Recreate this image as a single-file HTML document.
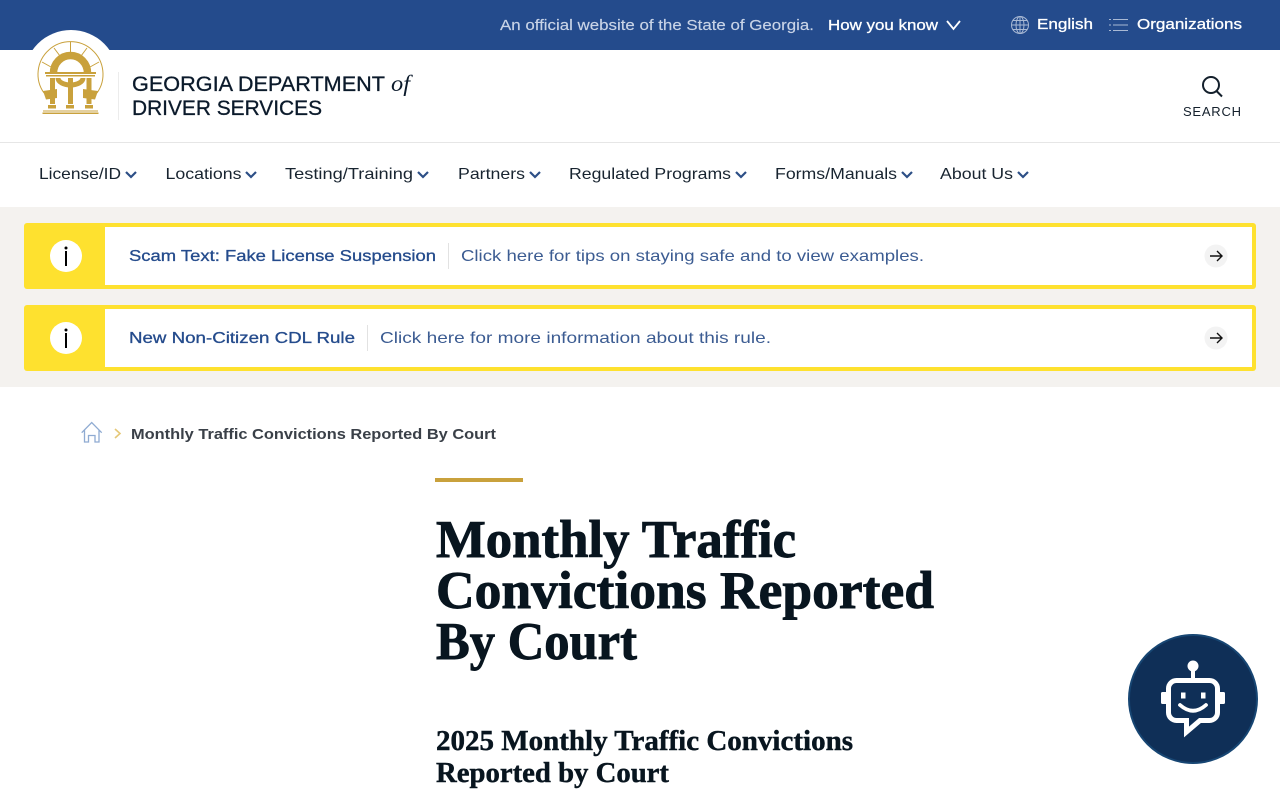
<!DOCTYPE html>
<html lang="en"><head><meta charset="utf-8"><title>Monthly Traffic Convictions Reported By Court</title>
<style>
html,body{margin:0;padding:0;width:1280px;height:800px;overflow:hidden;background:#fff}
svg{display:block}
text{font-family:"Liberation Sans",sans-serif;white-space:pre}
.m{stroke-width:.3px}
.l{stroke-width:.15px}
.serif{font-family:"Liberation Serif",serif;font-weight:700;fill:#08151f;stroke:#08151f;stroke-width:.9px}
.serif2{font-family:"Liberation Serif",serif;font-weight:700;fill:#08151f;stroke:#08151f;stroke-width:.45px}
</style></head><body>
<svg width="1280" height="800" viewBox="0 0 1280 800" xmlns="http://www.w3.org/2000/svg">
<rect width="1280" height="50" fill="#244b8c"/>
<text x="500" y="30" font-size="15" fill="#c9d4e7" stroke="#c9d4e7" class="l" textLength="314" lengthAdjust="spacingAndGlyphs">An official website of the State of Georgia.</text>
<text x="828" y="30" font-size="15" fill="#fff" stroke="#fff" class="m" textLength="110" lengthAdjust="spacingAndGlyphs">How you know</text>
<path d="M947 21l6.500 8 6.500-8" fill="none" stroke="#fff" stroke-width="1.800"/>
<g fill="none" stroke="#a9b9d4" stroke-width="1"><circle cx="1020" cy="25" r="8.500"/><ellipse cx="1020" cy="25" rx="4" ry="8.500"/><path d="M1020 16.500v17M1011.500 25h17M1013 20.500h14M1013 29.500h14"/></g>
<text x="1037" y="29" font-size="15" fill="#fff" stroke="#fff" class="m" textLength="56" lengthAdjust="spacingAndGlyphs">English</text>
<g stroke="#a9b9d4" stroke-width="1"><path d="M1113 19.500h15M1113 25h15M1113 30.500h15"/><path d="M1109 19.500h2M1109 25h2M1109 30.500h2"/></g>
<text x="1137" y="29" font-size="15" fill="#fff" stroke="#fff" class="m" textLength="105" lengthAdjust="spacingAndGlyphs">Organizations</text>

<circle cx="71" cy="77" r="47" fill="#fff"/>
<g fill="none" stroke="#c9a13c">
<path d="M44 93A32.500 32.500 0 1 1 97 93" stroke-width="1"/>
<path d="M70.500 42v12M54 48l6 8M87 48l-6 8M42 62l9 5M99 62l-9 5" stroke-width="1"/>
<path d="M53.500 73A17 17.500 0 0 1 87.500 73" stroke-width="7.500"/>
<path d="M58 78a12.500 7 0 0 0 25 0" stroke-width="5"/>
</g>
<g fill="#c9a13c">
<rect x="45" y="72" width="51" height="2"/><rect x="46" y="75" width="49" height="1.500"/>
<rect x="50" y="78" width="5" height="26"/><rect x="68" y="78" width="5" height="26"/><rect x="86.500" y="78" width="5" height="26"/>
<path d="M43 91l14-2 0 9-11 1.500z"/><path d="M98 91l-15-2 0 9 12 1.500z"/>
<rect x="48" y="105" width="8" height="3.500"/><rect x="66" y="105" width="8" height="3.500"/><rect x="85" y="105" width="8" height="3.500"/>
<rect x="43" y="110.500" width="55" height="1"/><rect x="42.500" y="112.500" width="56" height="1.500"/>
</g>
<rect x="118" y="72" width="1" height="48" fill="#ececec"/>
<text x="132" y="91" font-size="21" fill="#0b1a2b" stroke="#0b1a2b" class="m" textLength="253" lengthAdjust="spacingAndGlyphs">GEORGIA DEPARTMENT</text>
<text x="391" y="91" font-size="23" font-style="italic" style="font-family:'Liberation Serif',serif" fill="#0b1a2b" textLength="19" lengthAdjust="spacingAndGlyphs">of</text>
<text x="132" y="115" font-size="21" fill="#0b1a2b" stroke="#0b1a2b" class="m" textLength="190" lengthAdjust="spacingAndGlyphs">DRIVER SERVICES</text>
<g fill="none" stroke="#14202c" stroke-width="2"><circle cx="1211" cy="85" r="8"/><path d="M1216.500 91l5.500 5.500"/></g>
<text x="1183" y="116" font-size="13" fill="#14202c" textLength="58" lengthAdjust="spacing">SEARCH</text>
<rect y="142" width="1280" height="1" fill="#e6e6e6"/>

<g font-size="16" fill="#182430">
<text x="39" y="179" textLength="82" lengthAdjust="spacingAndGlyphs">License/ID</text>
<text x="165.500" y="179" textLength="76" lengthAdjust="spacingAndGlyphs">Locations</text>
<text x="285" y="179" textLength="128" lengthAdjust="spacingAndGlyphs">Testing/Training</text>
<text x="458" y="179" textLength="67" lengthAdjust="spacingAndGlyphs">Partners</text>
<text x="569" y="179" textLength="162" lengthAdjust="spacingAndGlyphs">Regulated Programs</text>
<text x="775" y="179" textLength="122" lengthAdjust="spacingAndGlyphs">Forms/Manuals</text>
<text x="940" y="179" textLength="73" lengthAdjust="spacingAndGlyphs">About Us</text>
</g>
<g fill="none" stroke="#2d4f86" stroke-width="2.200">
<path d="M126 172l5 5 5-5M246 172l5 5 5-5M418 172l5 5 5-5M530 172l5 5 5-5M736 172l5 5 5-5M902 172l5 5 5-5M1018 172l5 5 5-5"/>
</g>

<rect y="207" width="1280" height="180" fill="#f4f2ef"/>
<g>
<rect x="24" y="223" width="1232" height="66" rx="3" fill="#fee12f"/><rect x="105" y="227" width="1147" height="58" fill="#fff"/>
<circle cx="66" cy="256" r="16" fill="#fff"/><circle cx="66" cy="248" r="1.500" fill="#000"/><rect x="65" y="251" width="2" height="15" fill="#000"/>
<text x="129" y="261" font-size="16" fill="#244b8c" stroke="#244b8c" class="m" textLength="307" lengthAdjust="spacingAndGlyphs">Scam Text: Fake License Suspension</text>
<rect x="448" y="243" width="1" height="26" fill="#e2e2e2"/>
<text x="461" y="261" font-size="16" fill="#3c5c92" textLength="463" lengthAdjust="spacingAndGlyphs">Click here for tips on staying safe and to view examples.</text>
<circle cx="1216" cy="256" r="11.500" fill="#f3f3f3"/><path d="M1210 256h12M1217 251l5 5-5 5" fill="none" stroke="#111" stroke-width="1.400"/>
</g>
<g>
<rect x="24" y="305" width="1232" height="66" rx="3" fill="#fee12f"/><rect x="105" y="309" width="1147" height="58" fill="#fff"/>
<circle cx="66" cy="338" r="16" fill="#fff"/><circle cx="66" cy="330" r="1.500" fill="#000"/><rect x="65" y="333" width="2" height="15" fill="#000"/>
<text x="129" y="343" font-size="16" fill="#244b8c" stroke="#244b8c" class="m" textLength="226" lengthAdjust="spacingAndGlyphs">New Non-Citizen CDL Rule</text>
<rect x="367" y="325" width="1" height="26" fill="#e2e2e2"/>
<text x="380" y="343" font-size="16" fill="#3c5c92" textLength="391" lengthAdjust="spacingAndGlyphs">Click here for more information about this rule.</text>
<circle cx="1216" cy="338" r="11.500" fill="#f3f3f3"/><path d="M1210 338h12M1217 333l5 5-5 5" fill="none" stroke="#111" stroke-width="1.400"/>
</g>

<path d="M81.700 432.700L91.700 422.500 101.700 432.700M84.500 430v12h4v-6.500h6.500v6.500h4V430" fill="none" stroke="#8fabd2" stroke-width="1.300"/>
<path d="M115 429l5 4.500-5 4.500" fill="none" stroke="#e5c878" stroke-width="1.600"/>
<text x="131" y="439" font-size="15" font-weight="700" fill="#3a4048" textLength="365" lengthAdjust="spacingAndGlyphs">Monthly Traffic Convictions Reported By Court</text>

<rect x="435" y="478" width="88" height="4" fill="#c9a13c"/>
<text class="serif" x="436" y="557" font-size="53" textLength="360" lengthAdjust="spacingAndGlyphs">Monthly Traffic</text>
<text class="serif" x="436" y="608" font-size="53" textLength="498" lengthAdjust="spacingAndGlyphs">Convictions Reported</text>
<text class="serif" x="436" y="659" font-size="53" textLength="201" lengthAdjust="spacingAndGlyphs">By Court</text>
<text class="serif2" x="436" y="750" font-size="29" textLength="417" lengthAdjust="spacingAndGlyphs">2025 Monthly Traffic Convictions</text>
<text class="serif2" x="436" y="782" font-size="29" textLength="233" lengthAdjust="spacingAndGlyphs">Reported by Court</text>

<circle cx="1193" cy="699" r="64" fill="#0f2f57" stroke="#174673" stroke-width="2"/>
<circle cx="1193" cy="666" r="5.500" fill="#fff"/><rect x="1191" y="666" width="4" height="13" fill="#fff"/>
<path d="M1176.500 680.500h33a8 8 0 0 1 8 8v24a8 8 0 0 1-8 8h-9.500l-13.500 11.500v-11.500h-10a8 8 0 0 1-8-8v-24a8 8 0 0 1 8-8z" fill="#0f2f57" stroke="#fff" stroke-width="5"/>
<rect x="1161" y="692" width="7" height="12" rx="1.500" fill="#fff"/><rect x="1218" y="692" width="7" height="12" rx="1.500" fill="#fff"/>
<rect x="1181" y="692.500" width="4.500" height="6" fill="#fff"/><rect x="1201" y="692.500" width="4.500" height="6" fill="#fff"/>
<path d="M1180 705q13 11.500 26 0" fill="none" stroke="#fff" stroke-width="3.800" stroke-linecap="round"/>
</svg>
</body></html>
